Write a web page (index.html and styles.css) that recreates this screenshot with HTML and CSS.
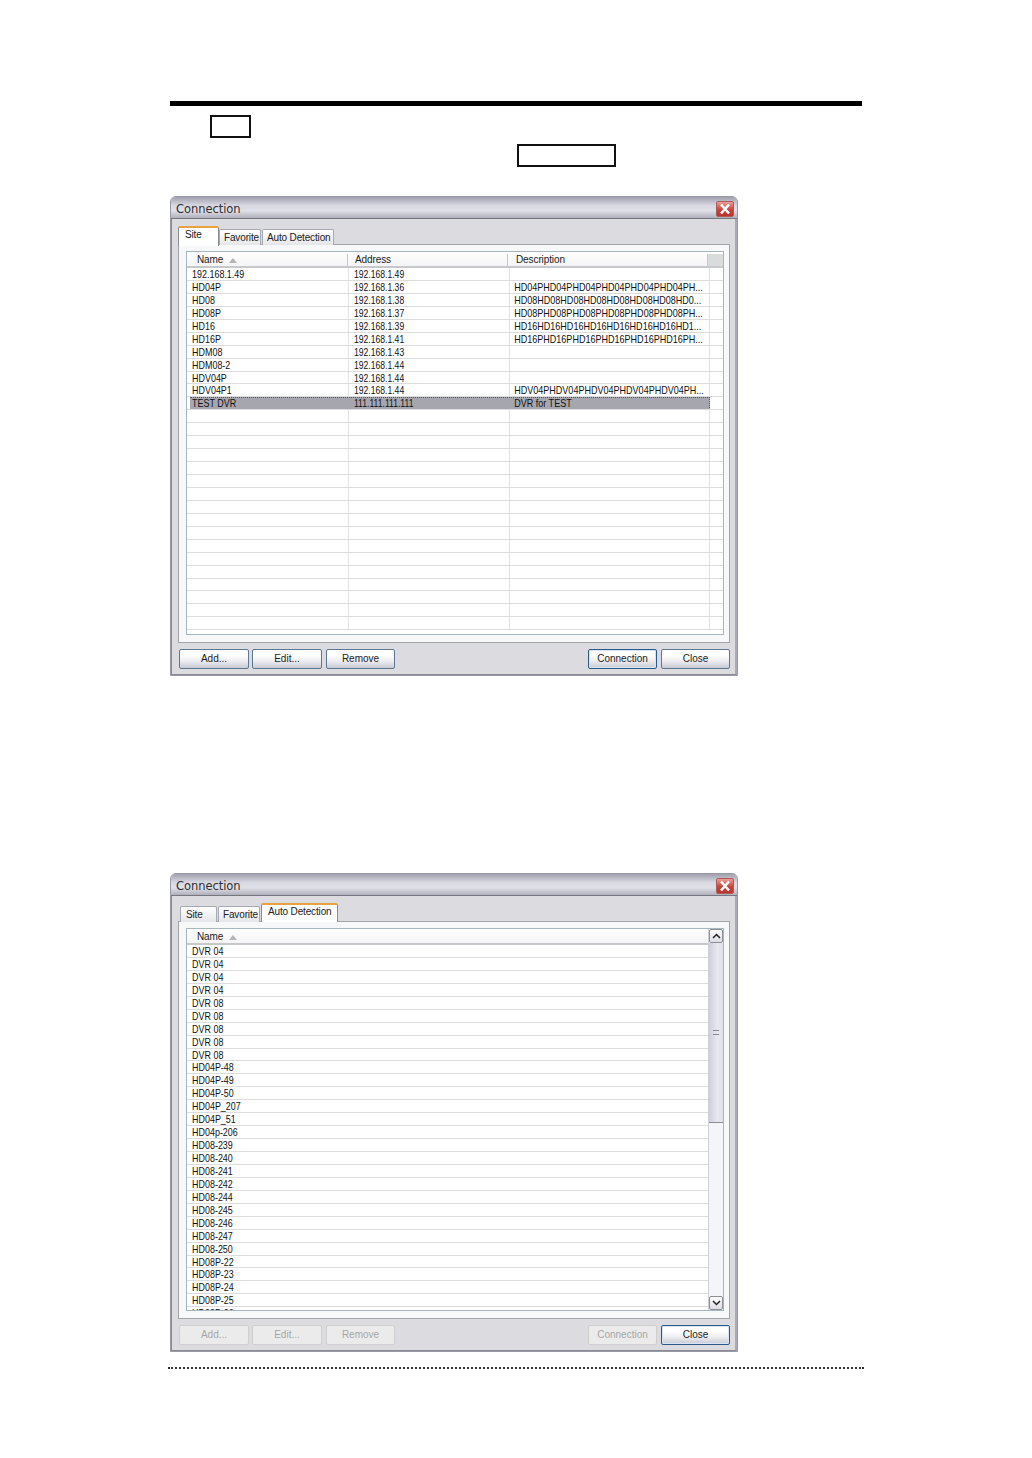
FILE: index.html
```html
<!DOCTYPE html>
<html lang="en">
<head>
<meta charset="utf-8">
<title>Connection</title>
<link rel="stylesheet" href="styles.css">
</head>
<body>
<main class="page">
  <div class="rule"></div>
  <div class="keyline key-a"><span class="keybox box-short"></span></div>
  <div class="keyline key-b"><span class="keybox box-long"></span></div>

  <section class="dialog first">
    <header class="titlebar"><span class="title">Connection</span>
      <span class="closebtn"><svg width="18" height="16" viewBox="0 0 18 16"><path d="M5 3.5l8 9M13 3.5l-8 9" stroke="#fff" stroke-width="2.6" fill="none"/></svg></span>
    </header>
    <div class="client">
      <nav class="tabs tabs-a">
        <span class="tab active t-site-a">Site</span>
        <span class="tab t-fav">Favorite</span>
        <span class="tab t-auto">Auto Detection</span>
      </nav>
      <div class="panel">
        <div class="list">
          <div class="main">
            <div class="head cols"><span class="hcell">Name<i class="sort"></i></span><span class="hcell">Address</span><span class="hcell">Description</span><span class="hfill"></span></div>
            <div class="rows">
              <div class="row cols"><span class="cell">192.168.1.49</span><span class="cell">192.168.1.49</span><span class="cell"></span></div>
              <div class="row cols"><span class="cell">HD04P</span><span class="cell">192.168.1.36</span><span class="cell">HD04PHD04PHD04PHD04PHD04PHD04PH...</span></div>
              <div class="row cols"><span class="cell">HD08</span><span class="cell">192.168.1.38</span><span class="cell">HD08HD08HD08HD08HD08HD08HD08HD0...</span></div>
              <div class="row cols"><span class="cell">HD08P</span><span class="cell">192.168.1.37</span><span class="cell">HD08PHD08PHD08PHD08PHD08PHD08PH...</span></div>
              <div class="row cols"><span class="cell">HD16</span><span class="cell">192.168.1.39</span><span class="cell">HD16HD16HD16HD16HD16HD16HD16HD1...</span></div>
              <div class="row cols"><span class="cell">HD16P</span><span class="cell">192.168.1.41</span><span class="cell">HD16PHD16PHD16PHD16PHD16PHD16PH...</span></div>
              <div class="row cols"><span class="cell">HDM08</span><span class="cell">192.168.1.43</span><span class="cell"></span></div>
              <div class="row cols"><span class="cell">HDM08-2</span><span class="cell">192.168.1.44</span><span class="cell"></span></div>
              <div class="row cols"><span class="cell">HDV04P</span><span class="cell">192.168.1.44</span><span class="cell"></span></div>
              <div class="row cols"><span class="cell">HDV04P1</span><span class="cell">192.168.1.44</span><span class="cell">HDV04PHDV04PHDV04PHDV04PHDV04PH...</span></div>
              <div class="row cols selected"><span class="cell">TEST DVR</span><span class="cell">111.111.111.111</span><span class="cell">DVR for TEST</span></div>
              <div class="row cols"></div>
              <div class="row cols"></div>
              <div class="row cols"></div>
              <div class="row cols"></div>
              <div class="row cols"></div>
              <div class="row cols"></div>
              <div class="row cols"></div>
              <div class="row cols"></div>
              <div class="row cols"></div>
              <div class="row cols"></div>
              <div class="row cols"></div>
              <div class="row cols"></div>
              <div class="row cols"></div>
              <div class="row cols"></div>
              <div class="row cols"></div>
              <div class="row cols"></div>
              <div class="row cols"></div>
            </div>
          </div>
        </div>
      </div>
      <footer class="actions">
        <span class="btn b-add">Add...</span><span class="btn">Edit...</span><span class="btn b-remove">Remove</span>
        <span class="spacer"></span>
        <span class="btn default b-conn">Connection</span><span class="btn b-close">Close</span>
      </footer>
    </div>
  </section>

  <section class="dialog second">
    <header class="titlebar"><span class="title">Connection</span>
      <span class="closebtn"><svg width="18" height="16" viewBox="0 0 18 16"><path d="M5 3.5l8 9M13 3.5l-8 9" stroke="#fff" stroke-width="2.6" fill="none"/></svg></span>
    </header>
    <div class="client">
      <nav class="tabs tabs-b">
        <span class="tab t-site-b">Site</span>
        <span class="tab t-fav">Favorite</span>
        <span class="tab active t-auto-b">Auto Detection</span>
      </nav>
      <div class="panel">
        <div class="list">
          <div class="main">
            <div class="head"><span class="hcell">Name<i class="sort"></i></span></div>
            <div class="rows">
              <div class="row"><span class="cell">DVR 04</span></div>
              <div class="row"><span class="cell">DVR 04</span></div>
              <div class="row"><span class="cell">DVR 04</span></div>
              <div class="row"><span class="cell">DVR 04</span></div>
              <div class="row"><span class="cell">DVR 08</span></div>
              <div class="row"><span class="cell">DVR 08</span></div>
              <div class="row"><span class="cell">DVR 08</span></div>
              <div class="row"><span class="cell">DVR 08</span></div>
              <div class="row"><span class="cell">DVR 08</span></div>
              <div class="row"><span class="cell">HD04P-48</span></div>
              <div class="row"><span class="cell">HD04P-49</span></div>
              <div class="row"><span class="cell">HD04P-50</span></div>
              <div class="row"><span class="cell">HD04P_207</span></div>
              <div class="row"><span class="cell">HD04P_51</span></div>
              <div class="row"><span class="cell">HD04p-206</span></div>
              <div class="row"><span class="cell">HD08-239</span></div>
              <div class="row"><span class="cell">HD08-240</span></div>
              <div class="row"><span class="cell">HD08-241</span></div>
              <div class="row"><span class="cell">HD08-242</span></div>
              <div class="row"><span class="cell">HD08-244</span></div>
              <div class="row"><span class="cell">HD08-245</span></div>
              <div class="row"><span class="cell">HD08-246</span></div>
              <div class="row"><span class="cell">HD08-247</span></div>
              <div class="row"><span class="cell">HD08-250</span></div>
              <div class="row"><span class="cell">HD08P-22</span></div>
              <div class="row"><span class="cell">HD08P-23</span></div>
              <div class="row"><span class="cell">HD08P-24</span></div>
              <div class="row"><span class="cell">HD08P-25</span></div>
              <div class="row"><span class="cell">HD08P-26</span></div>
            </div>
          </div>
          <aside class="scrollbar">
            <span class="sb-btn"><svg width="9" height="6" viewBox="0 0 9 6"><path d="M1 5l3.500-3.500L8 5" stroke="#222" stroke-width="1.500" fill="none"/></svg></span>
            <span class="sb-thumb"><i class="grip"></i></span>
            <span class="sb-track"></span>
            <span class="sb-btn"><svg width="9" height="6" viewBox="0 0 9 6"><path d="M1 1l3.500 3.500L8 1" stroke="#222" stroke-width="1.500" fill="none"/></svg></span>
          </aside>
        </div>
      </div>
      <footer class="actions">
        <span class="btn off b-add">Add...</span><span class="btn off">Edit...</span><span class="btn off b-remove">Remove</span>
        <span class="spacer"></span>
        <span class="btn off b-conn">Connection</span><span class="btn default b-close">Close</span>
      </footer>
    </div>
  </section>

  <div class="dots"></div>
</main>
</body>
</html>
```
FILE: styles.css
```css
* { box-sizing: border-box; }
html, body { margin: 0; background: #fff; }
body { font-family: "Liberation Sans", Arial, sans-serif; color: #1c1c1c; }
.page { width: 1032px; height: 1458px; padding: 101px 170px 0; overflow: hidden; }
.rule { height: 5px; background: #000; }
.keyline { display: flex; height: 23px; }
.key-a { margin-top: 9px; padding-left: 40px; }
.key-b { margin-top: 6px; padding-left: 347px; }
.keybox { display: block; height: 23px; border: 2px solid #111; }
.box-short { width: 41px; }
.box-long { width: 99px; }

.dialog { width: 568px; height: 480px; display: flex; flex-direction: column; border-radius: 6px 6px 0 0; border: 1px solid #9a9aa4; background: #dcdce0; overflow: hidden; }
.first { margin-top: 29px; }
.second { margin-top: 197px; height: 479px; }
.titlebar { height: 22px; flex: none; display: flex; align-items: center; justify-content: space-between; padding: 2px 2px 0 5px; background: linear-gradient(#a0a0ae 0%, #d8d8e2 40%, #e0e0e8 65%, #b0b0bc 100%); border-bottom: 1px solid #75767e; }
.title { font: 11.5px/14px "DejaVu Sans", sans-serif; color: #2e2e2e; letter-spacing: -0.05px; }
.closebtn { width: 18px; height: 16px; margin-right: 1px; display: block; border-radius: 2px; background: linear-gradient(#e9a09a, #c8443c 55%, #b8352f); border: 1px solid #b05a56; line-height: 0; }
.closebtn svg { margin: -1px; display: block; }

.client { flex: 1; min-height: 0; display: flex; flex-direction: column; padding: 0 5px 0 6px; border-left: 1px solid #8a8a96; border-right: 2px solid #a8a8c0; border-bottom: 1px solid #8a8a96; }
.tabs { height: 26px; flex: none; display: flex; align-items: flex-end; position: relative; z-index: 1; margin-bottom: -1px; }
.tab { display: block; height: 16px; font-size: 10px; line-height: 15px; text-align: left; padding-left: 4px; background: linear-gradient(#fff, #e6e6ea); border: 1px solid #a6a8b2; border-bottom: 0; border-radius: 2px 2px 0 0; letter-spacing: -.15px; color: #222; }
.tab.active { height: 19px; background: #fff; border-top: 2px solid #e8a33c; border-color: #e8a33c #8a8c94 #fff; line-height: 14px; }
.t-site-a { width: 41px; padding-left: 6px; margin-bottom: -1px; height: 20px !important; }
.t-site-b { width: 37px; margin-left: 2px; margin-right: 1px; padding-left: 5px; }
.t-fav { width: 42px; margin-right: 1px; }
.t-auto { width: 72px; }
.t-auto-b { width: 77px; padding-left: 6px; }

.panel { height: 399px; flex: none; background: #f7f8fa; border: 1px solid #a2a4a8; padding: 6px 5px 7px 7px; }
.second .panel { height: 398px; }
.list { height: 100%; display: flex; background: #fff; border: 1px solid #a6b6be; overflow: hidden; }
.main { flex: 1; min-width: 0; display: flex; flex-direction: column; }
.head { height: 16px; padding-top: 2px; flex: none; display: flex; border-bottom: 2px solid #c6c8cc; background: linear-gradient(#fff, #f4f4f6); font-size: 10px; line-height: 12px; }
.hcell { display: flex; align-items: center; padding-left: 10px; letter-spacing: -.1px; color: #222; }
.head.cols .hcell { border-right: 1px solid #c8c8c8; }
.hcell:nth-child(1) { width: 161px; }
.hcell:nth-child(2) { width: 160px; padding-left: 7px; }
.hcell:nth-child(3) { width: 200px; padding-left: 8px; }
.hfill { flex: 1; background: #d8dcdc; }
.sort { width: 0; height: 0; margin-left: 6px; border: 4px solid transparent; border-top: 0; border-bottom: 5px solid #b4b4b4; }
.rows { flex: 1; min-height: 0; overflow: hidden; }
.row { position: relative; height: 12.95px; display: flex; border-bottom: 1px solid #dcdcdc; font-size: 10.5px; line-height: 12px; overflow: hidden; color: #111; }
.row.cols { background-image: linear-gradient(#e2e2e2, #e2e2e2), linear-gradient(#e2e2e2, #e2e2e2), linear-gradient(#e2e2e2, #e2e2e2); background-size: 1px 100%; background-repeat: no-repeat; background-position: 161px 0, 322px 0, 522px 0; }
.cell { display: block; padding-left: 6px; white-space: nowrap; height: 13px; transform: scaleX(.85); transform-origin: 0 0; }
.cols .cell:nth-child(1) { width: 162px; }
.cols .cell:nth-child(2) { width: 160px; transform: scaleX(.82); }
.cols .cell:nth-child(3) { width: 200px; transform: scaleX(.86); }
.selected::before { content: ""; position: absolute; left: 3px; top: 0; width: 519px; height: 12px; background: #a6a6ae; border: 1px dotted #55555c; border-width: 1px 1px 0 0; }

.scrollbar { width: 15px; flex: none; display: flex; flex-direction: column; background: #f4f5fa; border-left: 1px solid #d0d0d4; }
.sb-btn { height: 14px; flex: none; display: flex; align-items: center; justify-content: center; border: 1px solid #8c9094; background: linear-gradient(#fff, #dcdce4); border-radius: 2px; }
.sb-thumb { height: 180px; flex: none; display: flex; align-items: center; justify-content: center; background: linear-gradient(90deg, #cdcee0, #e8e8f0 60%, #e0e0e8); border-bottom: 1px solid #8c8c90; }
.grip { width: 6px; height: 5px; border-top: 1px solid #888; border-bottom: 1px solid #888; }
.sb-track { flex: 1; }

.actions { flex: 1; display: flex; align-items: flex-start; gap: 3px; padding-top: 6px; }
.btn { display: block; width: 70px; height: 20px; font-size: 10px; line-height: 18px; text-align: center; background: linear-gradient(#fff 30%, #eeeef2 60%, #c8cad4); border: 1px solid #5e7892; border-radius: 2px; color: #222; }
.b-add { margin-left: 1px; }
.b-remove { width: 69px; margin-left: 1px; }
.b-conn { width: 69px; }
.b-close { width: 69px; margin-left: 1px; }
.btn.default { border-color: #2a5a8c; box-shadow: inset 0 0 0 1px #d8e4f4; }
.btn.off { background: #ebebeb; border-color: #cfcfcf; color: #a6a6a6; }
.spacer { flex: 1; }

.dots { margin: 15px 0 0 -2px; width: 696px; border-top: 2px dotted #333; }
```
